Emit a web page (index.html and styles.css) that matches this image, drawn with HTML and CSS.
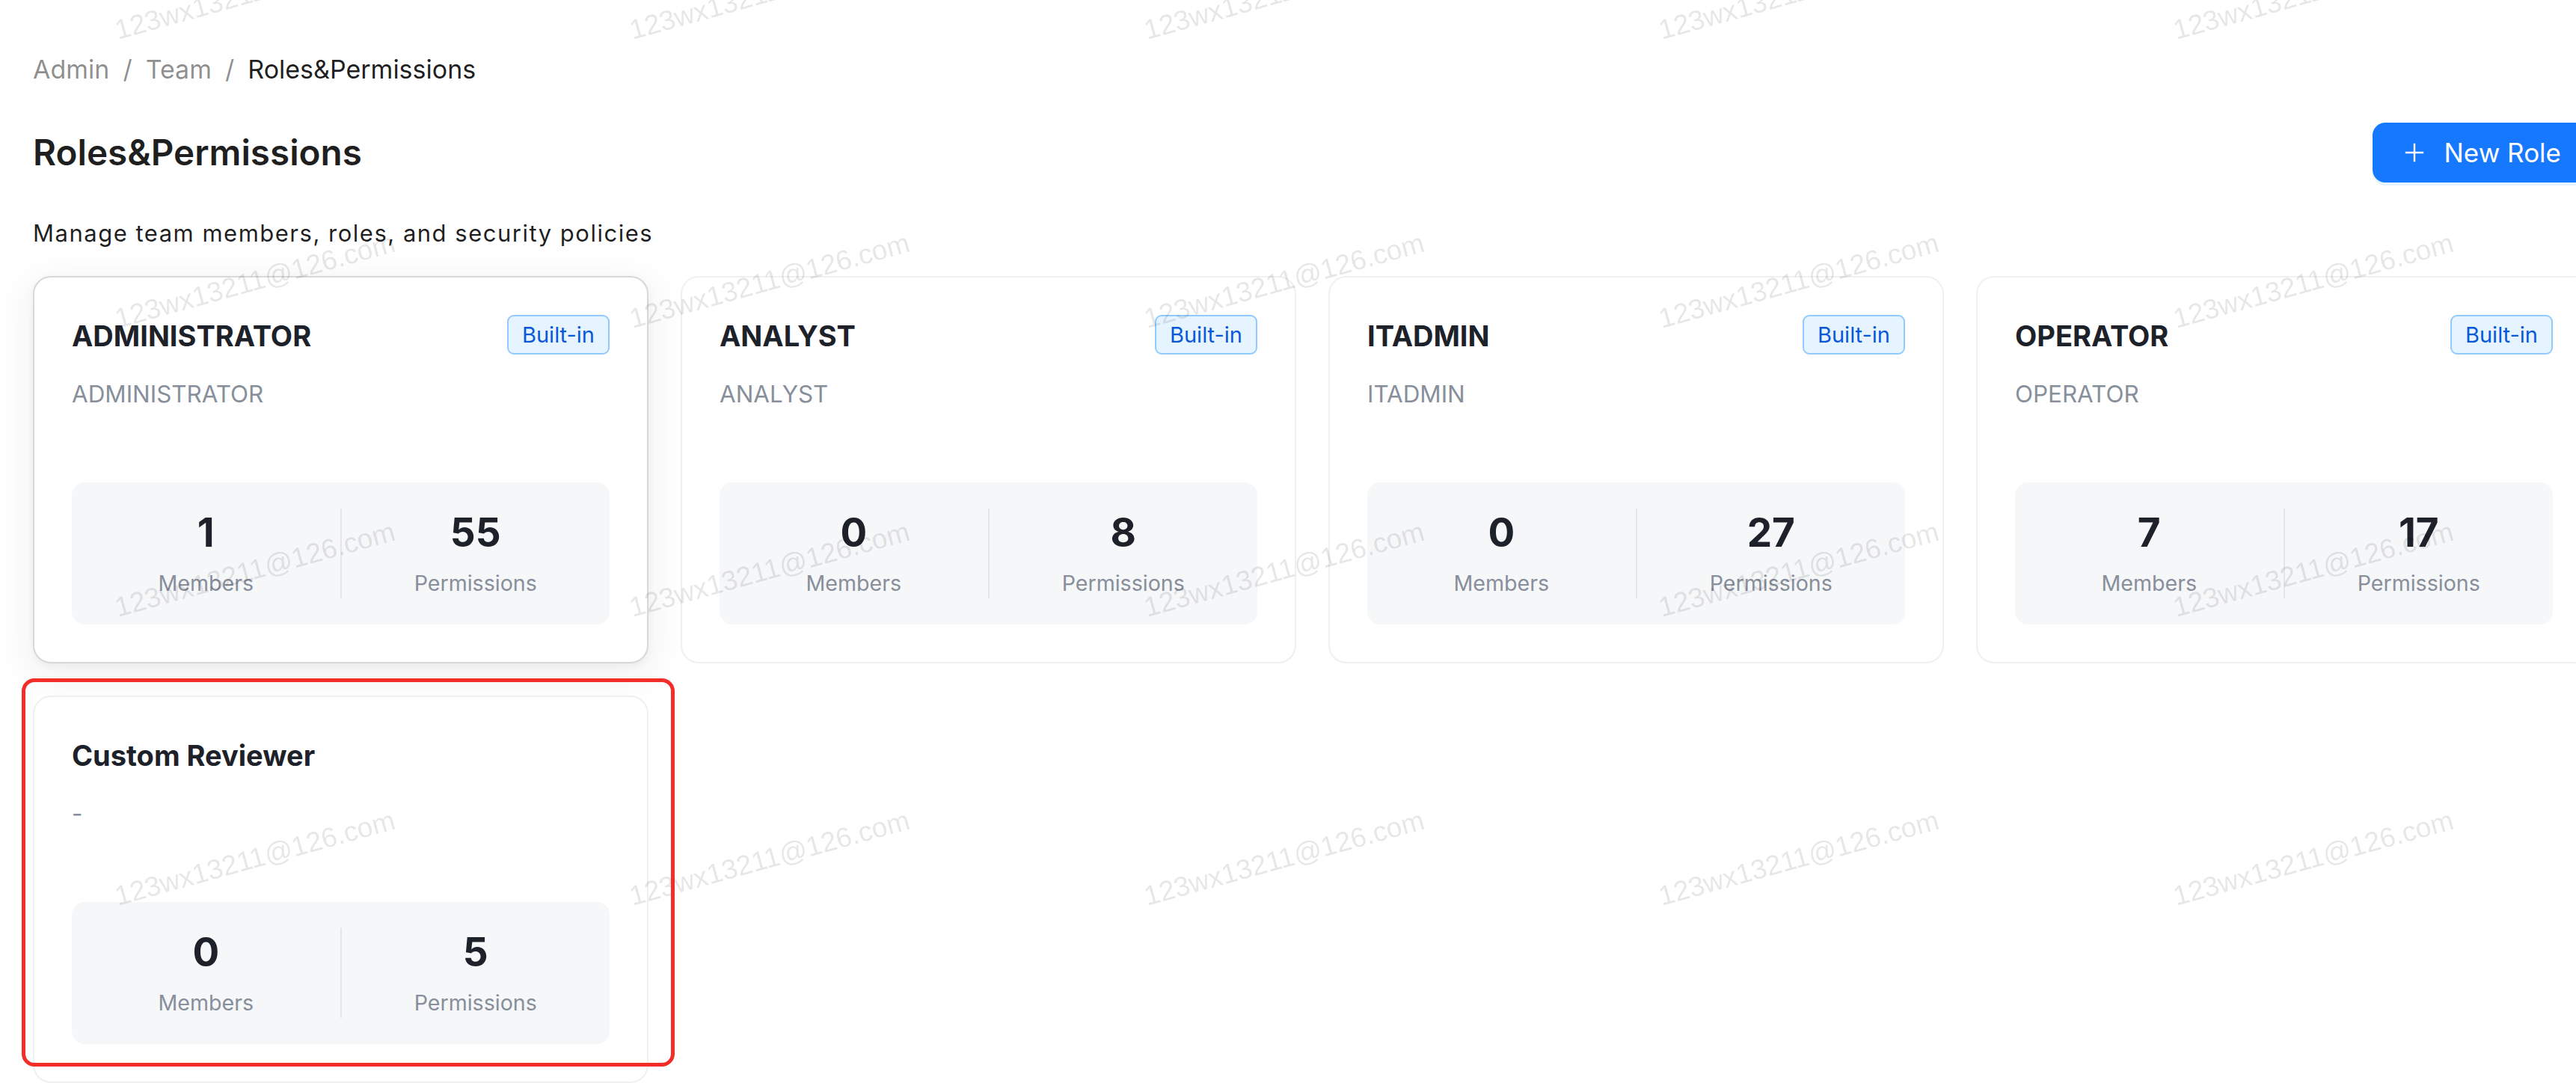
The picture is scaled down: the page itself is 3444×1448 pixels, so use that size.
FILE: index.html
```html
<!DOCTYPE html>
<html lang="en">

<head>
    <meta charset="UTF-8">
    <meta name="viewport" content="width=device-width, initial-scale=1.0">
    <title>Roles&amp;Permissions</title>
    <link rel="stylesheet" href="styles.css">
</head>

<body>
    <div class="page">
        <nav class="breadcrumb">
            <span>Admin</span><span class="sep">/</span><span>Team</span><span class="sep">/</span><span class="current">Roles&amp;Permissions</span>
        </nav>

        <div class="page-header">
            <h1 class="page-title">Roles&amp;Permissions</h1>
            <button class="btn-primary">
                <svg class="btn-icon" viewBox="0 0 16 16" fill="none" stroke="currentColor" stroke-width="1.3">
                    <path d="M8 1.5v13M1.5 8h13" />
                </svg>
                <span>New Role</span>
            </button>
        </div>

        <p class="page-desc">Manage team members, roles, and security policies</p>

        <div class="role-grid">
            <div class="role-card is-hover">
                <div class="role-head">
                    <h3 class="role-name">ADMINISTRATOR</h3>
                    <span class="tag">Built-in</span>
                </div>
                <p class="role-desc">ADMINISTRATOR</p>
                <div class="role-stats">
                    <div class="stat"><div class="stat-value">1</div><div class="stat-label">Members</div></div>
                    <div class="stat-divider"></div>
                    <div class="stat"><div class="stat-value">55</div><div class="stat-label">Permissions</div></div>
                </div>
            </div>

            <div class="role-card">
                <div class="role-head">
                    <h3 class="role-name">ANALYST</h3>
                    <span class="tag">Built-in</span>
                </div>
                <p class="role-desc">ANALYST</p>
                <div class="role-stats">
                    <div class="stat"><div class="stat-value">0</div><div class="stat-label">Members</div></div>
                    <div class="stat-divider"></div>
                    <div class="stat"><div class="stat-value">8</div><div class="stat-label">Permissions</div></div>
                </div>
            </div>

            <div class="role-card">
                <div class="role-head">
                    <h3 class="role-name">ITADMIN</h3>
                    <span class="tag">Built-in</span>
                </div>
                <p class="role-desc">ITADMIN</p>
                <div class="role-stats">
                    <div class="stat"><div class="stat-value">0</div><div class="stat-label">Members</div></div>
                    <div class="stat-divider"></div>
                    <div class="stat"><div class="stat-value">27</div><div class="stat-label">Permissions</div></div>
                </div>
            </div>

            <div class="role-card">
                <div class="role-head">
                    <h3 class="role-name">OPERATOR</h3>
                    <span class="tag">Built-in</span>
                </div>
                <p class="role-desc">OPERATOR</p>
                <div class="role-stats">
                    <div class="stat"><div class="stat-value">7</div><div class="stat-label">Members</div></div>
                    <div class="stat-divider"></div>
                    <div class="stat"><div class="stat-value">17</div><div class="stat-label">Permissions</div></div>
                </div>
            </div>

            <div class="role-card">
                <div class="role-head">
                    <h3 class="role-name">Custom Reviewer</h3>
                </div>
                <p class="role-desc">-</p>
                <div class="role-stats">
                    <div class="stat"><div class="stat-value">0</div><div class="stat-label">Members</div></div>
                    <div class="stat-divider"></div>
                    <div class="stat"><div class="stat-value">5</div><div class="stat-label">Permissions</div></div>
                </div>
            </div>
        </div>
    </div>

    <!-- account watermark, tiled over the whole page -->
    <div class="watermark">
        <span>123wx13211@126.com</span><span>123wx13211@126.com</span><span>123wx13211@126.com</span><span>123wx13211@126.com</span><span>123wx13211@126.com</span>
        <span>123wx13211@126.com</span><span>123wx13211@126.com</span><span>123wx13211@126.com</span><span>123wx13211@126.com</span><span>123wx13211@126.com</span>
        <span>123wx13211@126.com</span><span>123wx13211@126.com</span><span>123wx13211@126.com</span><span>123wx13211@126.com</span><span>123wx13211@126.com</span>
        <span>123wx13211@126.com</span><span>123wx13211@126.com</span><span>123wx13211@126.com</span><span>123wx13211@126.com</span><span>123wx13211@126.com</span>
    </div>

    <div class="highlight"></div>
</body>

</html>
```

FILE: styles.css
```css
* {
    box-sizing: border-box;
}

body {
    margin: 0;
    width: 3444px;
    height: 1448px;
    position: relative;
    overflow: hidden;
    background-color: #fff;
    font-family: Inter, "Noto Sans", sans-serif;
    color: rgba(0, 0, 0, 0.88);
}

.page {
    width: 3421px;
    margin-left: 44px;
    padding-top: 65px;
}

/* breadcrumb */
.breadcrumb {
    display: flex;
    font-size: 34px;
    line-height: 55px;
    color: rgba(0, 0, 0, 0.45);
}

.sep {
    margin: 0 18px;
}

.current {
    color: rgba(0, 0, 0, 0.88);
}

/* title row */
.page-header {
    display: flex;
    justify-content: space-between;
    align-items: center;
    height: 80px;
    margin-top: 44px;
}

.page-title {
    margin: 0;
    font-size: 47.6px;
    font-weight: 600;
    line-height: 58px;
}

.btn-primary {
    display: flex;
    align-items: center;
    gap: 24px;
    height: 80px;
    padding: 0 41px;
    border: none;
    border-radius: 17px;
    background-color: #1677ff;
    color: #fff;
    font-family: Inter, sans-serif;
    font-size: 35px;
    box-shadow: 0 4px 0 rgba(5, 145, 255, 0.1);
}

.btn-icon {
    width: 30px;
    height: 30px;
}

.page-desc {
    margin: 44px 0 0;
    font-size: 31px;
    letter-spacing: 1.5px;
    line-height: 48px;
}

/* role cards */
.role-grid {
    display: grid;
    grid-template-columns: repeat(4, 823px);
    gap: 43px;
    margin-top: 33px;
}

.role-card {
    padding: 50px;
    border: 2px solid #eef0f2;
    border-radius: 24px;
    background-color: #fff;
}

.role-card.is-hover {
    border-color: #d7d8db;
    box-shadow: 0 4px 12px rgba(0, 0, 0, 0.05), 0 12px 48px 10px rgba(30, 40, 70, 0.05);
}

.role-head {
    display: flex;
    justify-content: space-between;
    align-items: flex-start;
}

.role-name {
    margin: 0;
    font-size: 38px;
    font-weight: 700;
    line-height: 57px;
    color: #1d2129;
}

.tag {
    padding: 0 18px;
    border: 2px solid #91caff;
    border-radius: 9px;
    background-color: #e6f4ff;
    color: #0958d9;
    font-size: 29px;
    line-height: 49px;
}

.role-desc {
    min-height: 88px;
    margin: 27px 0 52px;
    font-size: 31.4px;
    line-height: 44px;
    color: #878f9b;
}

.role-stats {
    display: grid;
    grid-template-columns: 1fr 2px 1fr;
    padding: 35px 0;
    border-radius: 17px;
    background-color: #f6f7f9;
}

.stat {
    text-align: center;
}

.stat-value {
    font-size: 53px;
    font-weight: 700;
    line-height: 64px;
    color: #1d2129;
}

.stat-label {
    margin-top: 15px;
    font-size: 28.6px;
    line-height: 41px;
    color: #878f9b;
}

.stat-divider {
    background-color: #e4e6e9;
}

/* watermark layer */
.watermark {
    position: absolute;
    top: 0;
    left: 0;
    width: 100%;
    height: 100%;
    display: grid;
    grid-template-columns: repeat(5, 688px);
    grid-auto-rows: 386px;
    padding: 23px 0 0 158px;
    pointer-events: none;
    z-index: 10;
}

.watermark span {
    justify-self: start;
    align-self: start;
    white-space: nowrap;
    font-family: "Liberation Sans", Arial, sans-serif;
    font-size: 37px;
    line-height: 36px;
    color: rgba(0, 0, 0, 0.11);
    transform: rotate(-15.5deg);
    transform-origin: 0 30.5px;
}

/* red outline around the custom role */
.highlight {
    position: absolute;
    left: 29px;
    top: 907px;
    width: 873px;
    height: 519px;
    border: 5px solid #f32d27;
    border-radius: 17px;
    z-index: 11;
}
```
